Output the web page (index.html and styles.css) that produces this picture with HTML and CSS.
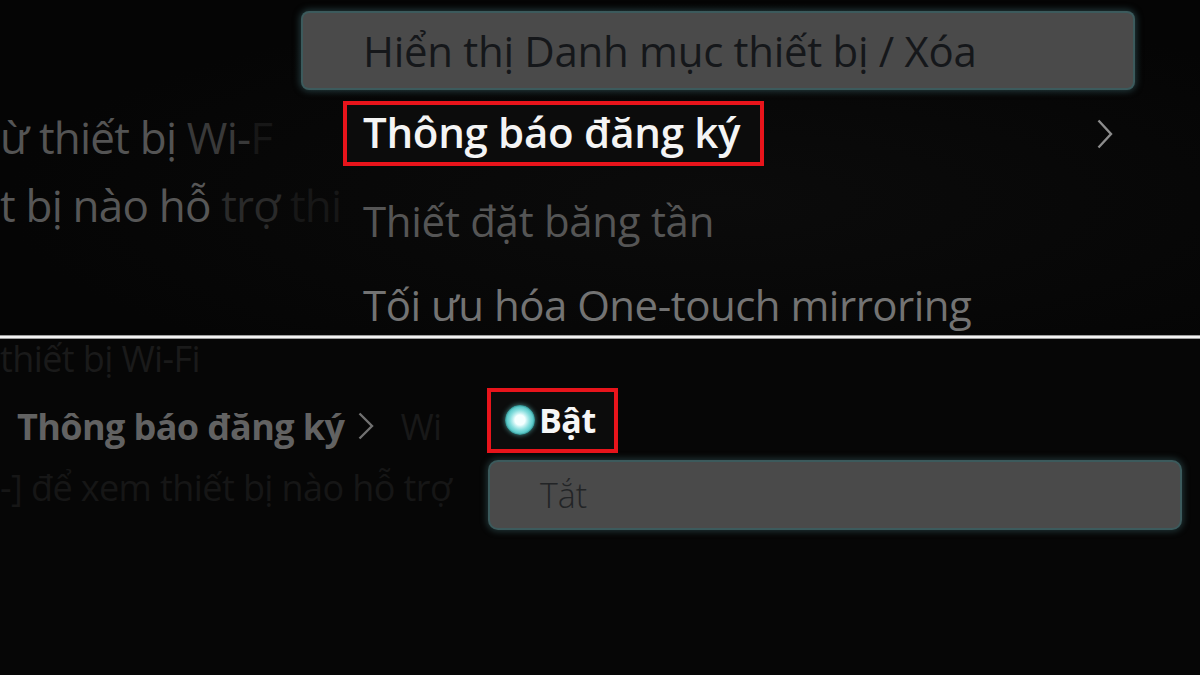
FILE: index.html
```html
<!DOCTYPE html>
<html lang="vi">
<head>
<meta charset="utf-8">
<title>Thông báo đăng ký</title>
<link rel="stylesheet" href="styles.css">
</head>
<body>
<main class="screen">
  <section class="panel panel-top">
    <div class="backdrop-text">
      <p class="bg-line first">ừ thiết bị <span class="fade1">Wi-</span><span class="fade2">F</span></p>
      <p class="bg-line">t bị nào hỗ <span class="fade1b">trợ</span><span class="fade2"> thi</span></p>
    </div>
    <ul class="menu">
      <li class="menu-row row-first"><div class="menu-item focused">Hiển thị Danh mục thiết bị / Xóa</div></li>
      <li class="menu-row"><div class="menu-item current"><span class="marked">Thông báo đăng ký</span><svg class="chevron" viewBox="0 0 16 30" width="16" height="30"><polyline points="1.5,1.5 14,15 1.5,28.5" fill="none" stroke="#8c8c8c" stroke-width="2.4"/></svg></div></li>
      <li class="menu-row"><div class="menu-item dim">Thiết đặt băng tần</div></li>
      <li class="menu-row row-last"><div class="menu-item mid">Tối ưu hóa One-touch mirroring</div></li>
    </ul>
  </section>
  <div class="divider"></div>
  <section class="panel panel-bottom">
    <div class="backdrop-text2">
      <p class="faint top-line">thiết bị Wi-Fi</p>
      <p class="setting-name">Thông báo đăng ký<svg class="chev-small" viewBox="0 0 16 28" width="16" height="28"><polyline points="1.5,1.5 14,14 1.5,26.5" fill="none" stroke="#707070" stroke-width="2.4"/></svg><span class="ghost">Wi</span></p>
      <p class="faint bottom-line">-] để xem thiết bị nào hỗ trợ</p>
    </div>
    <div class="options">
      <div class="option-row"><span class="marked small"><span class="radio"></span>Bật</span></div>
      <div class="option-row"><div class="option focused">Tắt</div></div>
    </div>
  </section>
</main>
</body>
</html>
```
FILE: styles.css
```css
* { box-sizing: border-box; }
html, body { margin: 0; padding: 0; background: #060606; }
body { width: 1200px; height: 675px; overflow: hidden; font-family: "Open Sans", "Noto Sans", "DejaVu Sans", sans-serif; }
p, ul { margin: 0; padding: 0; list-style: none; }

.screen { width: 1200px; height: 675px; display: flex; flex-direction: column; background: #070707; }

.panel-top {
  flex: none;
  height: 335px;
  display: grid;
  grid-template-columns: 303px 42px 788px 1fr;
  grid-template-rows: 335px;
  overflow: hidden;
  background: radial-gradient(ellipse at 60% 60%, #0b0b0b, #050505 70%);
}

.backdrop-text {
  grid-column: 1 / 3;
  grid-row: 1;
  padding-top: 103px;
  white-space: nowrap;
}
.bg-line {
  font-size: 44px;
  line-height: 68px;
  color: #575757;
  letter-spacing: -0.8px;
}
.bg-line.first { color: #545454; }
.fade1 { color: #393939; }
.fade1b { color: #2a2a2a; }
.fade2 { color: #171717; }

.menu {
  grid-column: 2 / 4;
  grid-row: 1;
  padding-top: 10px;
  display: flex;
  flex-direction: column;
}
.menu-row {
  flex: none;
  height: 87px;
  display: flex;
  align-items: center;
}
.menu-row.row-first { height: 80px; }
.menu-row.row-last { height: 81px; }
.menu-item {
  width: 100%;
  display: flex;
  align-items: center;
  padding-left: 60px;
  font-size: 42px;
  letter-spacing: -0.3px;
  white-space: nowrap;
}
.menu-item.focused {
  height: 75px;
  background: #4a4a4a;
  color: #15171a;
  border-radius: 6px;
  box-shadow: 0 0 0 2px #3c5a5c, 0 0 7px 3px rgba(70,120,125,0.5);
}
.menu-item.current {
  color: #f4f4f4;
  font-weight: 600;
  padding-left: 40px;
  padding-right: 20px;
  justify-content: space-between;
}
.marked {
  display: inline-flex;
  align-items: center;
  height: 65px;
  padding: 0 20px 4px 16px;
  border: 4px solid #e8141b;
  background: #0c0c0c;
}
.chevron { display: block; }
.menu-item.dim { color: #555; }
.menu-item.mid { color: #737373; font-weight: 500; letter-spacing: -0.5px; }

.divider {
  flex: none;
  height: 4px;
  background: #f2f2f2;
  border-top: 1px solid #9a9a9a;
  border-bottom: 1px solid #9a9a9a;
}

.panel-bottom {
  flex: 1;
  display: grid;
  grid-template-columns: 487px 693px 1fr;
  grid-template-rows: 100%;
  background: #060606;
  overflow: hidden;
}
.backdrop-text2 {
  grid-column: 1;
  white-space: nowrap;
  font-size: 36px;
  letter-spacing: -0.6px;
}
.faint { color: #161616; }
.faint.top-line { line-height: 40px; color: #1a1a1a; }
.faint.bottom-line { line-height: 46px; }
.setting-name {
  color: #626262;
  font-weight: 700;
  height: 86px;
  padding-left: 17px;
  padding-top: 8px;
  display: flex;
  align-items: center;
}
.chev-small { display: block; margin-left: 14px; }
.ghost { margin-left: 26px; font-weight: 400; color: #181818; }

.options {
  grid-column: 2;
  padding-top: 49px;
  display: flex;
  flex-direction: column;
  gap: 9px;
}
.option-row { display: flex; }
.marked.small {
  height: 65px;
  width: 131px;
  padding: 0 10px 2px 14px;
  font-size: 34px;
  font-weight: 700;
  color: #f6f6f6;
  letter-spacing: -0.5px;
  gap: 4px;
}
.radio {
  flex: none;
  width: 30px; height: 30px;
  border-radius: 50%;
  background: radial-gradient(circle, #f4ffff 0 5px, #c4f1f1 7px, #86dede 10px, #5cc9c9 13px, #2d8a8a 15px);
  box-shadow: 0 0 5px rgba(110,220,220,0.6);
}
.option.focused {
  width: 690px;
  height: 66px;
  margin-left: 3px;
  background: #4a4a4a;
  border-radius: 8px;
  box-shadow: 0 0 0 2px #3c5a5c, 0 0 7px 3px rgba(70,120,125,0.45);
  color: #222426;
  font-size: 34px;
  font-weight: 300;
  padding-left: 50px;
  display: flex;
  align-items: center;
}
```
